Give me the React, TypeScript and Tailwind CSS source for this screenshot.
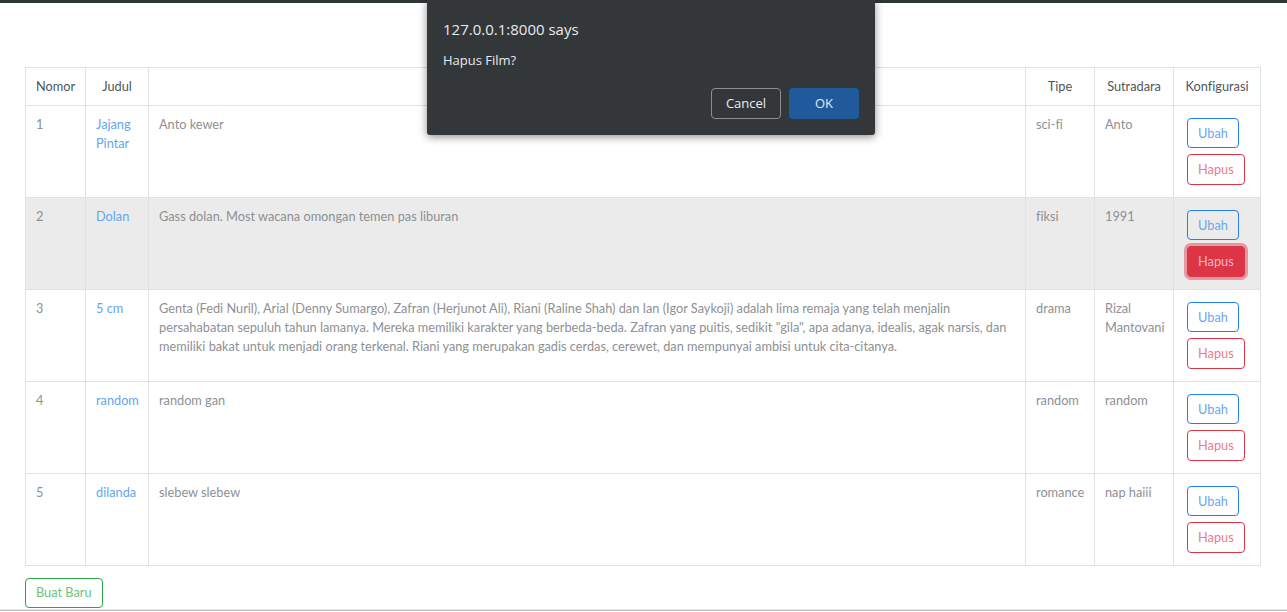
import React from 'react';

type Film = {
  id: number;
  judul: string;
  sinopsis: string;
  tipe: string;
  sutradara: string;
};

const films: Film[] = [
  { id: 1, judul: 'Jajang Pintar', sinopsis: 'Anto kewer', tipe: 'sci-fi', sutradara: 'Anto' },
  { id: 2, judul: 'Dolan', sinopsis: 'Gass dolan. Most wacana omongan temen pas liburan', tipe: 'fiksi', sutradara: '1991' },
  {
    id: 3,
    judul: '5 cm',
    sinopsis:
      'Genta (Fedi Nuril), Arial (Denny Sumargo), Zafran (Herjunot Ali), Riani (Raline Shah) dan Ian (Igor Saykoji) adalah lima remaja yang telah menjalin persahabatan sepuluh tahun lamanya. Mereka memiliki karakter yang berbeda-beda. Zafran yang puitis, sedikit "gila", apa adanya, idealis, agak narsis, dan memiliki bakat untuk menjadi orang terkenal. Riani yang merupakan gadis cerdas, cerewet, dan mempunyai ambisi untuk cita-citanya.',
    tipe: 'drama',
    sutradara: 'Rizal Mantovani',
  },
  { id: 4, judul: 'random', sinopsis: 'random gan', tipe: 'random', sutradara: 'random' },
  { id: 5, judul: 'dilanda', sinopsis: 'slebew slebew', tipe: 'romance', sutradara: 'nap haiii' },
];

function ConfirmDialog() {
  return (
    <div className="absolute left-[427px] top-0 w-[448px] h-[135px] bg-[#33373a] rounded-b-[3px] shadow-[0_2px_8px_rgba(0,0,0,0.45)] font-['Open_Sans',sans-serif] text-[#e8eaed]">
      <div className="pl-[16px] pt-[19px] text-[15px] leading-[20px]">127.0.0.1:8000 says</div>
      <div className="pl-[16px] pt-[12px] text-[13px] leading-[18px]">Hapus Film?</div>
      <div className="flex justify-end gap-[8px] pr-[16px] pt-[19px]">
        <button className="w-[70px] h-[31px] rounded-[4px] border border-[#8b8f92] text-[13px] text-[#e8eaed]">
          Cancel
        </button>
        <button className="w-[70px] h-[31px] rounded-[4px] bg-[#215a9c] text-[13px] text-[#e8eaed]">
          OK
        </button>
      </div>
    </div>
  );
}

export default function App() {
  return (
    <div className="relative w-[1287px] h-[612px] overflow-hidden bg-white font-['Lato',sans-serif] [font-variant-ligatures:none]">
      <div className="h-[3px] bg-[#2f3436]" />

      <div className="px-[25px] pt-[64px]">
        <table className="table-fixed border-collapse w-[1235px] text-[12.75px] leading-[19px]">
          <colgroup>
            <col className="w-[60px]" />
            <col className="w-[63px]" />
            <col className="w-[877px]" />
            <col className="w-[69px]" />
            <col className="w-[79px]" />
            <col className="w-[87px]" />
          </colgroup>
          <thead>
            <tr className="h-[38px] text-[#4f555b]">
              <th className="border border-[#dee2e6] font-normal text-center px-[10px] pb-[1px]">Nomor</th>
              <th className="border border-[#dee2e6] font-normal text-center px-[10px] pb-[1px]">Judul</th>
              <th className="border border-[#dee2e6] font-normal text-center px-[10px] pb-[1px]"></th>
              <th className="border border-[#dee2e6] font-normal text-center px-[10px] pb-[1px]">Tipe</th>
              <th className="border border-[#dee2e6] font-normal text-center px-[6px] pb-[1px]">Sutradara</th>
              <th className="border border-[#dee2e6] font-normal text-center px-[6px] pb-[1px]">Konfigurasi</th>
            </tr>
          </thead>
          <tbody className="text-[#8d9094]">
            {films.map((f) => (
              <tr key={f.id} className={f.id === 2 ? 'h-[92px] bg-[#ebebeb]' : 'h-[92px]'}>
                <td className="border border-[#dee2e6] align-top px-[10px] pt-[9px]">{f.id}</td>
                <td className="border border-[#dee2e6] align-top px-[10px] pt-[9px] text-[#62a5ee]">{f.judul}</td>
                <td className="border border-[#dee2e6] align-top px-[10px] pt-[9px]">{f.sinopsis}</td>
                <td className="border border-[#dee2e6] align-top px-[10px] pt-[9px]">{f.tipe}</td>
                <td className="border border-[#dee2e6] align-top px-[10px] pt-[9px]">{f.sutradara}</td>
                <td className="border border-[#dee2e6] align-top px-[10px] pt-[12px]">
                  <div className="flex flex-col items-start gap-[6px] pl-[3px]">
                    <button className="h-[30px] px-[10px] rounded-[4px] border border-[#2680eb] text-[#6aa8f0]">
                      Ubah
                    </button>
                    {f.id === 2 ? (
                      <button className="h-[31px] px-[10px] rounded-[4px] border border-[#dc3545] bg-[#dc3545] text-[#f3b7c0] shadow-[0_0_0_3px_rgba(220,53,69,0.45)]">
                        Hapus
                      </button>
                    ) : (
                      <button className="h-[31px] px-[10px] rounded-[4px] border border-[#dc3545] text-[#ea7c8c]">
                        Hapus
                      </button>
                    )}
                  </div>
                </td>
              </tr>
            ))}
          </tbody>
        </table>

        <button className="mt-[12px] h-[30px] px-[10px] rounded-[4px] border border-[#28a745] text-[12.75px] text-[#6cc27f]">
          Buat Baru
        </button>
      </div>

      <div className="mt-[1px] h-[2px] bg-[#e8e8e8] border-b border-[#bdbdbd]" />

      <ConfirmDialog />
    </div>
  );
}
